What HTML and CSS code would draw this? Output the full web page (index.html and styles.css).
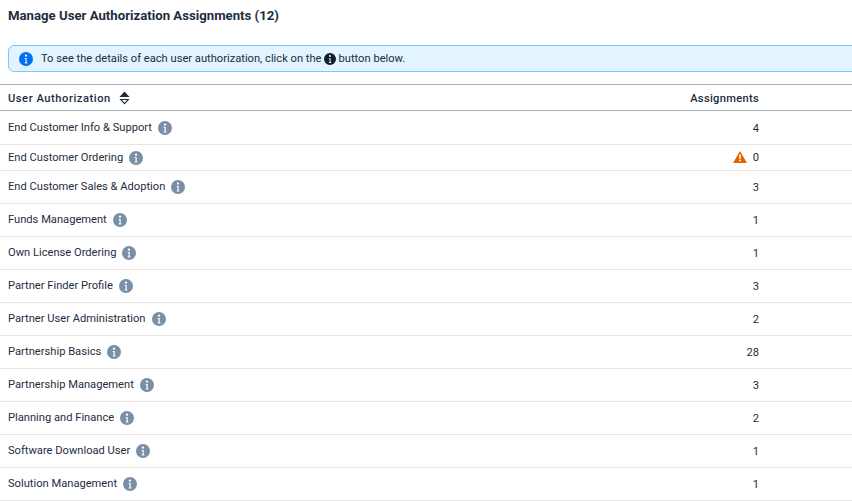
FILE: index.html
```html
<!DOCTYPE html>
<html lang="en">
<head>
<meta charset="utf-8">
<title>Manage User Authorization Assignments</title>
<link rel="stylesheet" href="styles.css">
</head>
<body>
<svg class="defs" width="0" height="0" aria-hidden="true">
  <symbol id="info" viewBox="0 0 14 14">
    <path fill-rule="evenodd" d="M7 0a7 7 0 1 1 0 14A7 7 0 0 1 7 0zM7 2.4a1.2 1.2 0 1 0 0 2.4a1.2 1.2 0 0 0 0-2.4zM5.7 6v1h.8v3.6h-.8v1h2.7v-1h-.7V6z"/>
  </symbol>
</svg>
<h1 class="title">Manage User Authorization Assignments (12)</h1>
<div class="banner">
  <svg class="banner-icon"><use href="#info"/></svg>
  <span>To see the details of each user authorization, click on the</span>
  <svg class="inline-icon"><use href="#info"/></svg>
  <span>button below.</span>
</div>
<div class="table">
  <div class="row head">
    <div class="name"><span class="head-label">User Authorization</span>
      <svg class="sort" viewBox="0 0 12 14"><path d="M6 0L11.5 6H.5z"/><path fill-rule="evenodd" d="M.5 8h11L6 14zM3.2 9.2L6 12.2 8.8 9.2z"/></svg>
    </div>
    <div class="count">Assignments</div>
  </div>
  <div class="row r34"><div class="name">End Customer Info &amp; Support<svg class="i"><use href="#info"/></svg></div><div class="count">4</div></div>
  <div class="row r26"><div class="name">End Customer Ordering<svg class="i"><use href="#info"/></svg></div><div class="count alert"><svg class="warn" viewBox="0 0 14 12"><path fill-rule="evenodd" d="M7 0L14 12H0zM6.2 3.6v4.2h1.6V3.6zM6.2 8.8v1.5h1.6V8.8z"/></svg>0</div></div>
  <div class="row"><div class="name">End Customer Sales &amp; Adoption<svg class="i"><use href="#info"/></svg></div><div class="count">3</div></div>
  <div class="row"><div class="name">Funds Management<svg class="i"><use href="#info"/></svg></div><div class="count">1</div></div>
  <div class="row"><div class="name">Own License Ordering<svg class="i"><use href="#info"/></svg></div><div class="count">1</div></div>
  <div class="row"><div class="name">Partner Finder Profile<svg class="i"><use href="#info"/></svg></div><div class="count">3</div></div>
  <div class="row"><div class="name">Partner User Administration<svg class="i"><use href="#info"/></svg></div><div class="count">2</div></div>
  <div class="row"><div class="name">Partnership Basics<svg class="i"><use href="#info"/></svg></div><div class="count">28</div></div>
  <div class="row"><div class="name">Partnership Management<svg class="i"><use href="#info"/></svg></div><div class="count">3</div></div>
  <div class="row"><div class="name">Planning and Finance<svg class="i"><use href="#info"/></svg></div><div class="count">2</div></div>
  <div class="row"><div class="name">Software Download User<svg class="i"><use href="#info"/></svg></div><div class="count">1</div></div>
  <div class="row"><div class="name">Solution Management<svg class="i"><use href="#info"/></svg></div><div class="count">1</div></div>
</div>
</body>
</html>
```
FILE: styles.css
```css
html, body { margin: 0; padding: 0; background: #fff; overflow: hidden; }
body { width: 852px; height: 501px; font-family: Roboto, "Noto Sans", "Liberation Sans", sans-serif; font-size: 11.15px; color: #32363a; }
.defs { position: absolute; }
.title { margin: 0; padding: 7px 0 0 8px; height: 38px; box-sizing: border-box; font-size: 13.2px; line-height: 17px; font-weight: 700; color: #1d2d3e; }
.banner { margin-left: 8px; width: 860px; height: 27px; box-sizing: border-box; display: flex; align-items: center; background: #e1f4ff; border: 1px solid #7fc6fc; border-radius: 6px; padding: 0 0 1px 10px; color: #1d2d3e; margin-top: 7px; }
.banner-icon { width: 14px; height: 14px; fill: #0070f2; margin: 1px 8px 0 0; }
.inline-icon { width: 12px; height: 12px; fill: #131e29; margin: 1px 3px 0 2px; }
.table { margin-top: 12px; }
.row { display: flex; justify-content: space-between; align-items: center; height: 33px; box-sizing: border-box; border-bottom: 1px solid #e5e5e5; padding: 0 93px 1px 8px; color: #1d2d3e; }
.row.r34 { height: 34px; }
.row.r26 { height: 26px; }
.row.head { height: 27px; border-top: 1px solid #a8b2bd; border-bottom: 1px solid #a8b2bd; padding: 1px 93px 0 8px; }
.head-label { font-weight: 500; letter-spacing: .55px; }
.head .count { font-weight: 500; letter-spacing: .3px; margin-top: 0; }
.name, .count { display: flex; align-items: center; }
.count { margin-top: 2px; }
.count.alert { margin-top: 0; }
.i { width: 14px; height: 14px; fill: #788fa6; margin: 1px 0 0 6px; }
.sort { width: 11px; height: 14px; fill: #1d2d3e; margin-left: 8px; }
.warn { width: 14px; height: 12px; fill: #e76500; margin-right: 6px; }
```
